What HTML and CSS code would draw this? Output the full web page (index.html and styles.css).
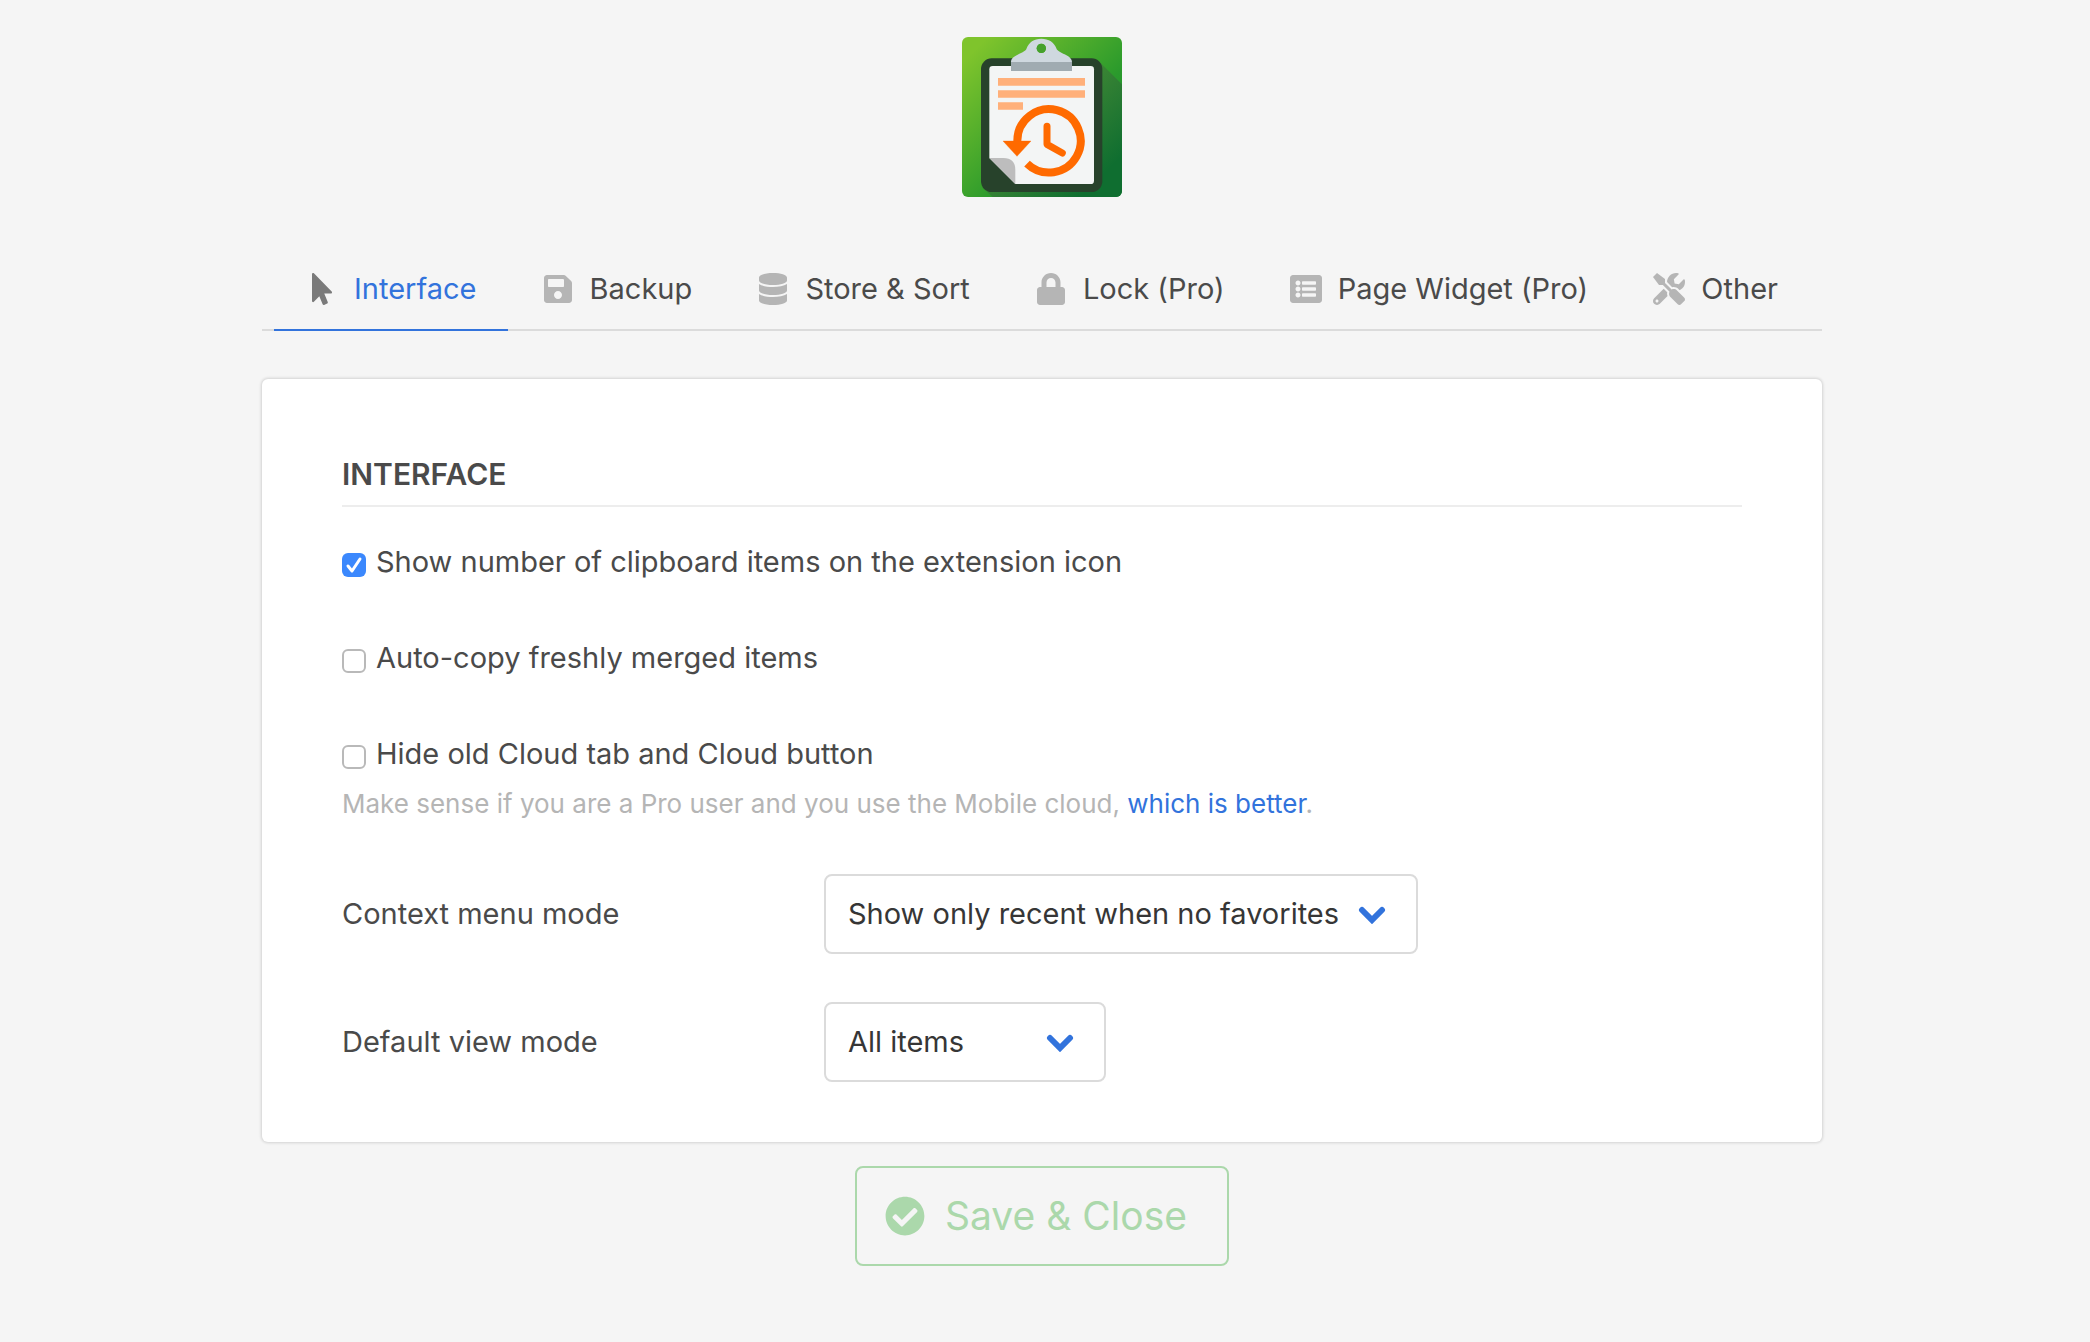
FILE: index.html
```html
<!DOCTYPE html>
<html lang="en">
<head>
<meta charset="utf-8">
<meta name="viewport" content="width=device-width, initial-scale=1">
<title>Clipboard History settings</title>
<link rel="stylesheet" href="styles.css">
</head>
<body>
<main class="page">
  <header class="brand">
    <svg class="logo" viewBox="0 0 480 480" role="img" aria-label="Clipboard History">
      <defs>
        <linearGradient id="bg" x1="0" y1="0" x2="1" y2="1">
          <stop offset="0.08" stop-color="#7fc42c"/>
          <stop offset="0.6" stop-color="#2a9a2c"/>
          <stop offset="1" stop-color="#15882e"/>
        </linearGradient>
        <linearGradient id="shade" x1="0" y1="0" x2="1" y2="1">
          <stop offset="0.45" stop-color="#3a8434"/>
          <stop offset="0.85" stop-color="#0f6e30"/>
        </linearGradient>
        <clipPath id="tile"><rect width="480" height="480" rx="18"/></clipPath>
      </defs>
      <g clip-path="url(#tile)">
        <rect width="480" height="480" fill="url(#bg)"/>
        <path d="M412 74 480 142V480H92L62 452Z" fill="url(#shade)"/>
      </g>
      <rect x="57" y="64" width="364" height="401" rx="32" fill="#27422b"/>
      <path d="M92 87H386q10 0 10 10V431q0 10-10 10H160L82 363V97q0-10 10-10Z" fill="#f3f5f5"/>
      <path d="M82 363H124q36 0 36 36V441Z" fill="#bdbdbd"/>
      <path d="M147 75C147 53 190 50 194 34C200 16 216 5 238 5S277 16 283 34C287 50 330 53 330 75V80H147ZM238 20a14 14 0 1 0 0 28a14 14 0 1 0 0-28Z" fill="#cfd8df" fill-rule="evenodd"/>
      <circle cx="238" cy="34" r="14" fill="#45a12c"/>
      <path d="M147 75H330V102H147Z" fill="#a0abb1"/>
      <path d="M108 123H369V146H108ZM108 160H369V182H108ZM108 196H183V218H108Z" fill="#ffb07a"/>
      <path d="M166 312A95 95 0 1 1 195 380" fill="none" stroke="#ff6a00" stroke-width="24"/>
      <path d="M123 312H207L165 358Z" fill="#ff6a00" stroke="#ff6a00" stroke-width="1"/>
      <path d="M255 268V322L301 348" fill="none" stroke="#ff6a00" stroke-width="21" stroke-linecap="round" stroke-linejoin="round"/>
    </svg>
  </header>

  <nav class="tabs" aria-label="Settings sections">
    <a class="tab tab-active" href="#interface" aria-current="page">
      <svg class="icon" viewBox="-96 0 512 512" aria-hidden="true"><path d="M302.189 329.126H196.105l55.831 135.993c3.889 9.428-.555 19.999-9.444 23.999l-49.165 21.427c-9.165 4-19.443-.571-23.332-9.714l-53.053-129.136-86.664 89.138C18.729 472.71 0 463.554 0 447.977V18.299C0 1.899 19.921-6.096 30.277 5.443l284.412 292.542c11.472 11.179 3.007 31.141-12.5 31.141z"/></svg>
      <span>Interface</span>
    </a>
    <a class="tab" href="#backup">
      <svg class="icon" viewBox="-32 0 512 512" aria-hidden="true"><path d="M433.941 129.941l-83.882-83.882A48 48 0 0 0 316.118 32H48C21.49 32 0 53.49 0 80v352c0 26.51 21.49 48 48 48h352c26.51 0 48-21.49 48-48V163.882a48 48 0 0 0-14.059-33.941zM224 416c-35.346 0-64-28.654-64-64 0-35.346 28.654-64 64-64s64 28.654 64 64c0 35.346-28.654 64-64 64zm96-304.52V212c0 6.627-5.373 12-12 12H76c-6.627 0-12-5.373-12-12V108c0-6.627 5.373-12 12-12h228.52c3.183 0 6.235 1.264 8.485 3.515l3.48 3.48A11.996 11.996 0 0 1 320 111.48z"/></svg>
      <span>Backup</span>
    </a>
    <a class="tab" href="#store">
      <svg class="icon" viewBox="-32 0 512 512" aria-hidden="true"><path d="M448 73.143v45.714C448 159.143 347.667 192 224 192S0 159.143 0 118.857V73.143C0 32.857 100.333 0 224 0s224 32.857 224 73.143zM448 176v102.857C448 319.143 347.667 352 224 352S0 319.143 0 278.857V176c48.125 33.143 136.208 48.572 224 48.572S399.874 209.143 448 176zm0 160v102.857C448 479.143 347.667 512 224 512S0 479.143 0 438.857V336c48.125 33.143 136.208 48.572 224 48.572S399.874 369.143 448 336z"/></svg>
      <span>Store &amp; Sort</span>
    </a>
    <a class="tab" href="#lock">
      <svg class="icon" viewBox="-32 0 512 512" aria-hidden="true"><path d="M400 224h-24v-72C376 68.2 307.8 0 224 0S72 68.2 72 152v72H48c-26.5 0-48 21.5-48 48v192c0 26.5 21.5 48 48 48h352c26.5 0 48-21.5 48-48V272c0-26.5-21.5-48-48-48zm-104 0H152v-72c0-39.7 32.3-72 72-72s72 32.3 72 72v72z"/></svg>
      <span>Lock (Pro)</span>
    </a>
    <a class="tab" href="#widget">
      <svg class="icon" viewBox="0 0 512 512" aria-hidden="true"><path d="M464 480H48c-26.51 0-48-21.49-48-48V80c0-26.51 21.49-48 48-48h416c26.51 0 48 21.49 48 48v352c0 26.51-21.49 48-48 48zM128 120c-22.091 0-40 17.909-40 40s17.909 40 40 40 40-17.909 40-40-17.909-40-40-40zm0 96c-22.091 0-40 17.909-40 40s17.909 40 40 40 40-17.909 40-40-17.909-40-40-40zm0 96c-22.091 0-40 17.909-40 40s17.909 40 40 40 40-17.909 40-40-17.909-40-40-40zm288-136v-32c0-6.627-5.373-12-12-12H204c-6.627 0-12 5.373-12 12v32c0 6.627 5.373 12 12 12h200c6.627 0 12-5.373 12-12zm0 96v-32c0-6.627-5.373-12-12-12H204c-6.627 0-12 5.373-12 12v32c0 6.627 5.373 12 12 12h200c6.627 0 12-5.373 12-12zm0 96v-32c0-6.627-5.373-12-12-12H204c-6.627 0-12 5.373-12 12v32c0 6.627 5.373 12 12 12h200c6.627 0 12-5.373 12-12z"/></svg>
      <span>Page Widget (Pro)</span>
    </a>
    <a class="tab" href="#other">
      <svg class="icon" viewBox="0 0 512 512" aria-hidden="true"><path d="M501.1 395.7L384 278.6c-23.1-23.1-57.6-27.6-85.4-13.9L192 158.1V96L64 0 0 64l96 128h62.1l106.6 106.6c-13.6 27.8-9.2 62.3 13.9 85.4l117.1 117.1c14.6 14.6 38.2 14.6 52.7 0l52.7-52.7c14.5-14.6 14.5-38.2 0-52.7zM331.7 225c28.3 0 54.9 11 74.9 31l19.4 19.4c15.8-6.9 30.8-16.5 43.8-29.5 37.1-37.1 49.7-89.3 37.9-136.7-2.2-9-13.5-12.1-20.1-5.5l-74.4 74.4-67.9-11.3L334 98.9l74.4-74.4c6.6-6.6 3.4-17.9-5.7-20.2-47.4-11.7-99.6.9-136.6 37.9-28.5 28.5-41.9 66.1-41.2 103.6l82.1 82.1c8.1-1.9 16.5-2.9 24.7-2.9zm-103.9 82l-56.7-56.7L18.7 402.8c-25 25-25 65.5 0 90.5s65.5 25 90.5 0l123.6-123.6c-7.6-19.9-9.9-41.6-5-62.7zM64 472c-13.2 0-24-10.8-24-24 0-13.3 10.7-24 24-24s24 10.7 24 24c0 13.2-10.7 24-24 24z"/></svg>
      <span>Other</span>
    </a>
  </nav>

  <form class="settings">
    <section class="card" id="interface">
      <h1 class="title">Interface</h1>

      <div class="checks">
        <label class="check"><input class="box" type="checkbox" checked><span>Show number of clipboard items on the extension icon</span></label>
        <label class="check"><input class="box" type="checkbox"><span>Auto-copy freshly merged items</span></label>
        <div>
          <label class="check"><input class="box" type="checkbox" aria-describedby="cloud-help"><span>Hide old Cloud tab and Cloud button</span></label>
          <p class="help" id="cloud-help">Make sense if you are a Pro user and you use the Mobile cloud, <a class="link" href="#cloud">which is better</a>.</p>
        </div>
      </div>

      <div class="fields">
        <div class="field">
          <label for="menu-mode">Context menu mode</label>
          <div class="picker picker-wide">
            <select class="select" id="menu-mode">
              <option>Show only recent when no favorites</option>
            </select>
            <svg class="chevron" viewBox="0 0 28 18" aria-hidden="true"><path d="M4 4 14 14 24 4"/></svg>
          </div>
        </div>
        <div class="field">
          <label for="view-mode">Default view mode</label>
          <div class="picker picker-narrow">
            <select class="select" id="view-mode">
              <option>All items</option>
            </select>
            <svg class="chevron" viewBox="0 0 28 18" aria-hidden="true"><path d="M4 4 14 14 24 4"/></svg>
          </div>
        </div>
      </div>
    </section>

    <button class="save" type="button">
      <svg class="save-icon" viewBox="0 0 512 512" aria-hidden="true"><path d="M504 256c0 136.967-111.033 248-248 248S8 392.967 8 256 119.033 8 256 8s248 111.033 248 248zM227.314 387.314l184-184c6.248-6.248 6.248-16.379 0-22.627l-22.627-22.627c-6.248-6.249-16.379-6.249-22.628 0L216 308.118l-70.059-70.059c-6.248-6.248-16.379-6.248-22.628 0l-22.627 22.627c-6.248 6.248-6.248 16.379 0 22.627l104 104c6.249 6.249 16.379 6.249 22.628.001z"/></svg>
      <span>Save &amp; Close</span>
    </button>
  </form>
</main>
</body>
</html>
```
FILE: styles.css
```css
*,
*::before,
*::after {
  box-sizing: border-box;
}

body {
  margin: 0;
  background: #f5f5f5;
  color: #4a4a4a;
  font-family: Inter, "Liberation Sans", sans-serif;
  font-size: 29px;
  line-height: 48px;
}

.page {
  max-width: 1608px;
  margin: 0 auto;
  padding: 37px 27px 77px 21px;
}

.brand {
  display: flex;
  justify-content: center;
}

.logo {
  display: block;
  width: 160px;
  height: 160px;
}

/* Tabs */
.tabs {
  display: flex;
  justify-content: space-between;
  margin-top: 52px;
  padding: 0 12px;
  box-shadow: inset 0 -2px #dbdbdb;
}

.tab {
  display: flex;
  align-items: center;
  gap: 16px;
  padding: 16px 32px;
  border-bottom: 2px solid transparent;
  color: #4a4a4a;
  text-decoration: none;
  white-space: nowrap;
}

.icon {
  flex: none;
  width: 32px;
  height: 32px;
  fill: #b5b5b5;
}

.tab-active {
  border-bottom-color: #3273dc;
  color: #3273dc;
}

.tab-active .icon {
  fill: #7a7a7a;
}

/* Settings card */
.settings {
  display: flex;
  flex-direction: column;
  align-items: center;
  gap: 24px;
  margin-top: 48px;
}

.card {
  width: 100%;
  padding: 71px 80px 60px;
  border-radius: 6px;
  background: #fff;
  box-shadow: 0 0 3px 1px rgba(10, 10, 10, 0.14);
}

.title {
  margin: 0;
  padding-bottom: 7px;
  border-bottom: 2px solid #ededed;
  font-size: 30px;
  font-weight: 600;
  line-height: 48px;
  text-transform: uppercase;
}

.checks {
  display: grid;
  gap: 48px;
  margin-top: 31px;
}

.check {
  display: flex;
  align-items: center;
  gap: 10px;
}

.box {
  flex: none;
  width: 24px;
  height: 24px;
  margin: 6px 0 0;
  border: 2px solid #b9b9b9;
  border-radius: 6px;
  background: #fff;
  appearance: none;
}

.box:checked {
  border: 0;
  background: #3b88fd url("data:image/svg+xml,%3Csvg xmlns='http://www.w3.org/2000/svg' viewBox='0 0 24 24'%3E%3Cpath d='M6 13 10 18 18 6' fill='none' stroke='white' stroke-width='3' stroke-linecap='round' stroke-linejoin='round'/%3E%3C/svg%3E");
}

.help {
  margin: 5px 0 0;
  color: #b5b5b5;
  font-size: 26px;
  line-height: 42px;
}

.link {
  color: #3273dc;
  text-decoration: none;
}

.fields {
  display: grid;
  gap: 48px;
  margin-top: 49px;
}

.field {
  display: grid;
  grid-template-columns: 482px 1fr;
  align-items: center;
}

.picker {
  position: relative;
}

.picker-wide {
  width: 594px;
}

.picker-narrow {
  width: 282px;
}

.select {
  display: block;
  width: 100%;
  height: 80px;
  padding: 0 64px 0 22px;
  border: 2px solid #dbdbdb;
  border-radius: 8px;
  background: #fff;
  color: #363636;
  font: inherit;
  appearance: none;
}

.chevron {
  position: absolute;
  top: 32px;
  right: 32px;
  width: 28px;
  height: 18px;
  fill: none;
  stroke: #3273dc;
  stroke-width: 6;
  stroke-linecap: round;
  pointer-events: none;
}

/* Save button */
.save {
  display: flex;
  align-items: center;
  gap: 20px;
  height: 100px;
  padding: 0 40px 0 28px;
  border: 2px solid #abd8ab;
  border-radius: 8px;
  background: transparent;
  color: #abd8ab;
  font: inherit;
  font-size: 39px;
}

.save-icon {
  width: 40px;
  height: 40px;
  fill: currentColor;
}
```
